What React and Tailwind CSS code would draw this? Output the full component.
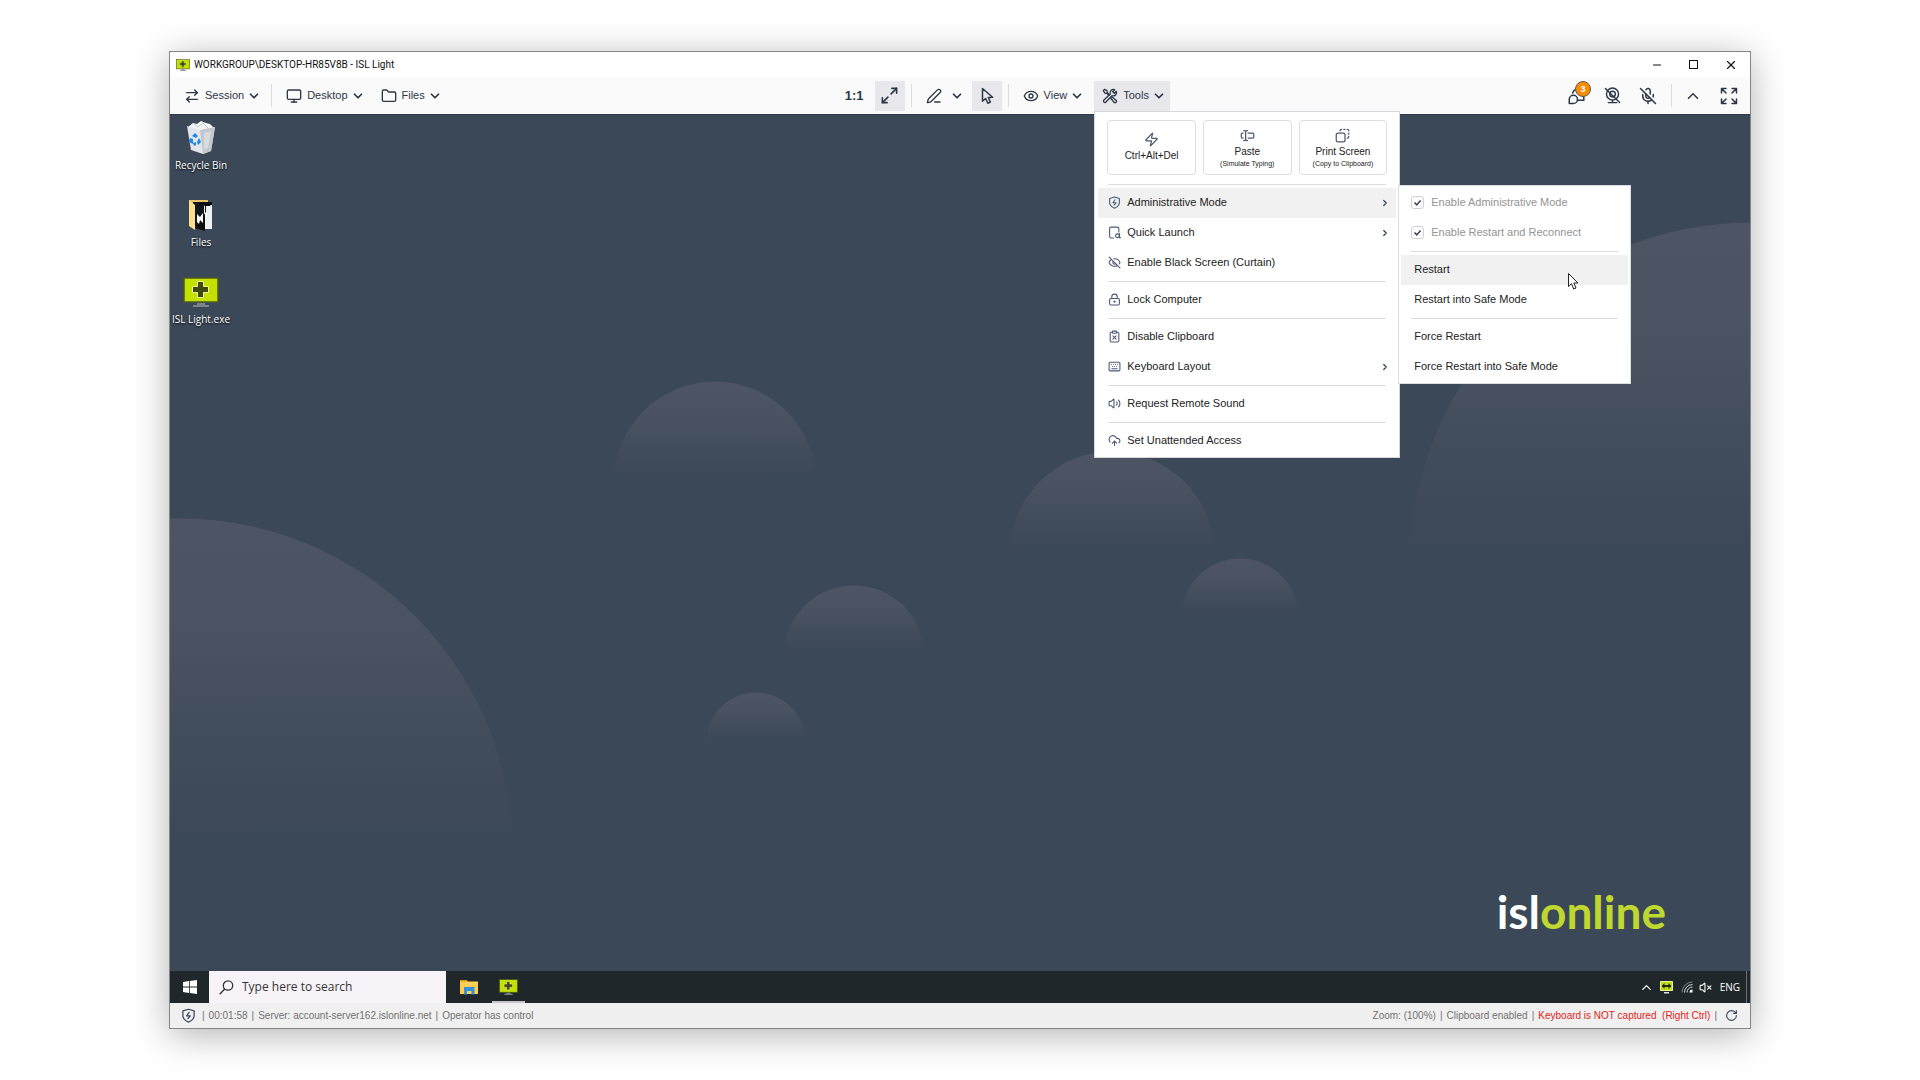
import React from 'react';
import {
    ArrowRightLeft, ChevronDown, ChevronRight, ChevronUp, ClipboardX, CloudUpload, Eye, EyeOff, Folder,
    Keyboard, LockKeyhole, Maximize2, MicOff, Minus, Monitor, PenLine, RotateCw, Search,
    TextCursorInput, Volume2, VolumeX, X, Zap,
} from 'lucide-react';

const IconBase = ({ size = 16, className = '', strokeWidth = 2, children }) => (
    <svg
        width={size}
        height={size}
        viewBox="0 0 24 24"
        fill="none"
        stroke="currentColor"
        strokeWidth={strokeWidth}
        strokeLinecap="round"
        strokeLinejoin="round"
        className={className}
        aria-hidden="true"
    >
        {children}
    </svg>
);

const PointerIcon = (props) => (
    <IconBase {...props}>
        <path d="M6 2v17l4.2-3.6 2.9 6.2 3.4-1.6-2.8-6.1 5.8-.3z" />
    </IconBase>
);

const ToolsIcon = (props) => (
    <IconBase {...props}>
        <path d="m2 4 2-2 3.500 2 .5 3 3 3M2 4l2 3.500 3 .5 3 3" />
        <path d="m14.500 13 6.500 5.500a2 2 0 0 1-3 3L13 15" />
        <path d="M19 2.500a5 5 0 0 0-6.500 6.500L2.500 18.500a2.200 2.200 0 0 0 3 3L15 11.500A5 5 0 0 0 21.500 5l-3 3-2.500-2.500z" />
    </IconBase>
);

const ShieldZapIcon = (props) => (
    <IconBase {...props}>
        <path d="M12 2 21 4.500V12c0 5-4 8.500-9 10.500C7 20.500 3 17 3 12V4.500z" />
        <path d="m13 7-4 5.500h6L11 17" />
    </IconBase>
);

const QuickLaunchIcon = (props) => (
    <IconBase {...props}>
        <path d="M10 22H6a3 3 0 0 1-3-3V4a2 2 0 0 1 2-2h12a3 3 0 0 1 3 3v6" />
        <circle cx="17.500" cy="18" r="3.500" />
        <path d="M21 14v7.500h2" />
    </IconBase>
);

const PrintScreenIcon = (props) => (
    <IconBase {...props}>
        <rect x="2" y="8" width="14" height="14" rx="3" />
        <path d="M8 4.500A2.500 2.500 0 0 1 10.500 2M14 2h2M19.500 2A2.500 2.500 0 0 1 22 4.500M22 8v2M22 13.500a2.500 2.500 0 0 1-2.500 2.500" />
    </IconBase>
);

const ChatIcon = (props) => (
    <IconBase {...props}>
        <path d="M3 22v-5.500A5.500 5.500 0 1 1 8.500 22z" />
        <path d="M7.500 8A7 7 0 0 1 21 8c1.500 2.500 1.500 6 1.500 9.500H14" />
    </IconBase>
);

const WebcamOffIcon = (props) => (
    <IconBase {...props}>
        <circle cx="12" cy="10" r="8.500" />
        <circle cx="12" cy="10" r="4" />
        <path d="M12 18.500V22M6 22h12M2 2l20 20" />
    </IconBase>
);

const FullscreenIcon = (props) => (
    <IconBase {...props}>
        <path d="M2 8V2h6M16 2h6v6M22 16v6h-6M8 22H2v-6M2.500 2.500 8 8M21.500 2.500 16 8M21.500 21.500 16 16M2.500 21.500 8 16" />
    </IconBase>
);

const IslIcon = ({ width, height, className = '' }) => (
    <svg width={width} height={height} viewBox="0 0 36 30" className={className} aria-hidden="true">
        <rect x="1" y="1" width="34" height="24" fill="#c4e000" stroke="#4d5a1c" strokeWidth="1.500" />
        <path d="M14.500 4.500h6v5h5v6h-5v5h-6v-5h-5v-6h5z" fill="#3f4a10" stroke="#eef79a" strokeWidth="1" />
        <path d="M14 26h8v2h4v2H10v-2h4z" fill="#7c828a" />
    </svg>
);

const TrayIslIcon = () => (
    <svg width="13" height="13" viewBox="0 0 13 13" className="ml-[6px]" aria-hidden="true">
        <path d="M.5.5h12v9H.5z" fill="#c4e000" stroke="#e9f3a0" />
        <path d="M1.500 5 4.500 2v2h4V2l3 3-3 3V6h-4v2z" fill="#20272a" />
        <path d="M4 11h5v1.500H4z" fill="#dfe3e6" />
    </svg>
);

const RecycleBinIcon = () => (
    <svg width="30" height="33" viewBox="0 0 30 33" aria-hidden="true">
        <path d="M2 6 7 2l4 1 4-3 5 2 4 1 4 4-3 3H4z" fill="#f2f4f6" />
        <path d="m8 3 4 3 5-4 5 5" stroke="#c3c8cd" fill="none" />
        <path d="m1 5 13 4 15-3-4 24-8 3-12-4z" fill="#e2e5e9" />
        <path d="m14 9 15-3-4 24-8 3z" fill="#c3c8ce" />
        <path d="m18 12 7-2-3 17-4 2z" fill="#d8dce0" />
        <path d="m6 15 3-3 3 3-2 2zM4 17l3 1v5l-4-2zM13 17l2 4-3 3-1-3zM7 22l3-1v3l-2 1z" fill="#1e88e5" />
    </svg>
);

const FilesIcon = () => (
    <svg width="26" height="32" viewBox="0 0 26 32" aria-hidden="true">
        <path d="M1 1h19v5H1z" fill="#e9c46a" />
        <path d="M5 3h19v24H5z" fill="#10151a" />
        <path d="M16 6h8v24h-8z" fill="#f7f9fb" />
        <path d="M24 4 8 3l9 4v25L7 29z" fill="#0b0d10" />
        <path d="M18 7h6v23h-6z" fill="#eef2f6" />
        <path d="m9 15 3 3 3-4v10l-3-3-1 4-2-2z" fill="#fff" />
        <path d="m1 1 6 5v25l-6-4z" fill="#fbdf8e" />
    </svg>
);

const WindowsLogo = () => (
    <svg width="14" height="14" viewBox="0 0 14 14" fill="#fff" aria-hidden="true">
        <path d="M0 2l6-.9v5.500H0zM6.800 1 14 0v6.600H6.800zM0 7.400h6v5.500L0 12zM6.800 7.400H14V14l-7.200-1z" />
    </svg>
);

const ExplorerIcon = () => (
    <svg width="18" height="16" viewBox="0 0 18 16" aria-hidden="true">
        <path d="M0 1h7l1 2H0z" fill="#e39a13" />
        <path d="M0 2.500h18V15H0z" fill="#fccf52" />
        <path d="M4 8h10.500v7.500h-3V12H7v3.500H4z" fill="#3490dc" />
    </svg>
);

const SearchIcon = () => (
    <svg width="15" height="15" viewBox="0 0 15 15" fill="none" stroke="#333" strokeWidth="1.300" aria-hidden="true">
        <circle cx="9" cy="5.500" r="4.700" />
        <path d="M5.700 9 .7 14.300" />
    </svg>
);

const WifiIcon = () => (
    <svg width="12" height="12" viewBox="0 0 12 12" fill="none" strokeWidth="1" aria-hidden="true">
        <path d="M1 11.500A10.500 10.500 0 0 1 11.500 1" stroke="#7d8488" />
        <path d="M3.500 11.500a8 8 0 0 1 8-8M6 11.500A5.500 5.500 0 0 1 11.500 6" stroke="#d5d9dc" />
        <path d="M8.500 11.500a3 3 0 0 1 3-3v3z" fill="#fff" />
    </svg>
);

const MouseCursor = ({ className }) => (
    <svg width="11" height="17" viewBox="0 0 11 17" className={className} aria-hidden="true">
        <path d="M.5.5v13l3-2.800 2.200 5.300 2.300-1-2.200-5H10z" fill="#fff" stroke="#222" />
    </svg>
);

// x, y and r of every bubble on the 1580x857 wallpaper
const bubbles = [
    [10, 736, 332],
    [545, 368, 101],
    [684, 541, 70],
    [586, 627, 49],
    [942, 439, 102],
    [1070, 502, 58],
    [1582, 450, 342],
];

const Wallpaper = () => (
    <svg
        className="absolute inset-0 w-full h-full"
        viewBox="0 0 1580 857"
        preserveAspectRatio="xMidYMid slice"
        aria-hidden="true"
    >
        <defs>
            <linearGradient id="bubble" x1="0" y1="0" x2="0" y2="1">
                <stop offset="0" stopColor="#4d5564" />
                <stop offset="0.150" stopColor="#4d5564" stopOpacity="0.850" />
                <stop offset="0.480" stopColor="#4d5564" stopOpacity="0" />
            </linearGradient>
        </defs>
        {bubbles.map(([x, y, r]) => (
            <circle key={`${x}-${y}`} cx={x} cy={y} r={r} fill="url(#bubble)" />
        ))}
    </svg>
);

const ToolbarButton = ({ icon: Icon, label, name, active }) => (
    <button
        type="button"
        aria-label={name}
        className={`h-[30px] pl-2 pr-1 flex items-center text-[11px] ${active ? 'bg-[#e8e7ec]' : ''}`}
    >
        <Icon size={16} strokeWidth={2} className="mr-[5px]" />
        {label}
        <ChevronDown size={14} strokeWidth={3} className="ml-[3px]" />
    </button>
);

const IconButton = ({ label, active, children }) => (
    <button
        type="button"
        aria-label={label}
        className={`relative size-[30px] flex items-center justify-center ${active ? 'bg-[#e8e7ec]' : ''}`}
    >
        {children}
    </button>
);

const Divider = () => <div className="w-px h-[23px] bg-[#dcdce2]" />;

const Separator = () => <div role="separator" className="h-px my-[3px] mx-[10px] bg-[#dcdde3]" />;

const ActionCard = ({ icon: Icon, title, note }) => (
    <button
        type="button"
        className={`h-[55px] flex-1 flex flex-col items-center justify-center rounded border border-[#dcdde6] ${note ? 'pt-px' : ''}`}
    >
        <Icon size={15} strokeWidth={2} className="text-[#4d5875]" />
        <span className="text-[10px] leading-[14px] mt-[2px] whitespace-nowrap">{title}</span>
        {note && <span className="text-[7px] leading-[9px] whitespace-nowrap">{note}</span>}
    </button>
);

const MenuItem = ({ icon: Icon, label, active, arrow }) => (
    <button
        type="button"
        role="menuitem"
        className={`w-full h-[30px] pr-[6px] flex items-center text-left whitespace-nowrap ${Icon ? 'pl-[10px]' : 'pl-[13px]'} ${active ? 'bg-[#f1f1f1]' : ''}`}
    >
        {Icon && <Icon size={13} strokeWidth={2} className="mr-[6px] text-[#4d5875]" />}
        {label}
        {arrow && <ChevronRight size={10} strokeWidth={3} className="ml-auto text-[#3a4560]" />}
    </button>
);

const CheckItem = ({ label }) => (
    <label className="h-[30px] px-[10px] flex items-center gap-[7px] text-[#949494] whitespace-nowrap">
        <span className="relative size-[13px]">
            <input
                type="checkbox"
                defaultChecked
                disabled
                className="block size-[13px] appearance-none rounded-[3px] border border-[#cfd0dc] bg-white"
            />
            <svg className="absolute inset-0" viewBox="0 0 13 13" fill="none" stroke="#3a4560" strokeWidth="1.500" aria-hidden="true">
                <path d="m3.500 6.500 2.200 2.300 4-4.300" />
            </svg>
        </span>
        {label}
    </label>
);

const RestartMenu = () => (
    <div
        role="menu"
        className="absolute left-full -top-[3px] ml-[2px] w-[233px] border border-[#dcdde3] bg-white px-[2px] pt-[2px] pb-px"
    >
        <CheckItem label="Enable Administrative Mode" />
        <CheckItem label="Enable Restart and Reconnect" />
        <Separator />
        <div className="relative">
            <MenuItem label="Restart" active />
            <MouseCursor className="absolute left-[167px] bottom-[-5px]" />
        </div>
        <MenuItem label="Restart into Safe Mode" />
        <Separator />
        <MenuItem label="Force Restart" />
        <MenuItem label="Force Restart into Safe Mode" />
    </div>
);

const ToolsMenu = () => (
    <div
        role="menu"
        className="absolute left-0 top-full z-10 w-[306px] border border-[#d5d6dc] bg-white px-[3px] pb-px text-[11px] text-[#222]"
    >
        <div className="flex gap-[7px] px-[9px] pt-2 pb-[6px]">
            <ActionCard icon={Zap} title="Ctrl+Alt+Del" />
            <ActionCard icon={TextCursorInput} title="Paste" note="(Simulate Typing)" />
            <ActionCard icon={PrintScreenIcon} title="Print Screen" note="(Copy to Clipboard)" />
        </div>
        <Separator />
        <div className="relative">
            <MenuItem icon={ShieldZapIcon} label="Administrative Mode" active arrow />
            <RestartMenu />
        </div>
        <MenuItem icon={QuickLaunchIcon} label="Quick Launch" arrow />
        <MenuItem icon={EyeOff} label="Enable Black Screen (Curtain)" />
        <Separator />
        <MenuItem icon={LockKeyhole} label="Lock Computer" />
        <Separator />
        <MenuItem icon={ClipboardX} label="Disable Clipboard" />
        <MenuItem icon={Keyboard} label="Keyboard Layout" arrow />
        <Separator />
        <MenuItem icon={Volume2} label="Request Remote Sound" />
        <Separator />
        <MenuItem icon={CloudUpload} label="Set Unattended Access" />
    </div>
);

const TitleBar = () => (
    <header className="h-[25px] pl-[6px] pr-3 flex items-center bg-white text-[#111]">
        <IslIcon width={14} height={12} />
        <h1 className="ml-1 font-['Roboto',sans-serif] text-[10px]">WORKGROUP\DESKTOP-HR85V8B - ISL Light</h1>
        <div className="ml-auto flex items-center gap-[25px]">
            <button type="button" aria-label="Minimize"><Minus size={12} strokeWidth={2} /></button>
            <button type="button" aria-label="Maximize"><span className="block size-[9px] m-px border border-[#111]" /></button>
            <button type="button" aria-label="Close"><X size={14} strokeWidth={2} /></button>
        </div>
    </header>
);

const Toolbar = () => (
    <nav className="h-[37px] flex items-center bg-[#fafafa] text-[#2d3748]">
        <div className="w-[42%] pl-[6px] flex items-center">
            <ToolbarButton icon={ArrowRightLeft} label="Session" />
            <div className="mx-[6px]"><Divider /></div>
            <ToolbarButton icon={Monitor} label="Desktop" />
            <div className="w-1" />
            <ToolbarButton icon={Folder} label="Files" />
        </div>
        <div className="flex items-center">
            <button type="button" className="w-[41px] h-[30px] text-[13px] font-bold">1:1</button>
            <IconButton label="Fit to window" active><Maximize2 size={19} strokeWidth={2} /></IconButton>
            <div className="mx-[6px]"><Divider /></div>
            <ToolbarButton icon={PenLine} name="Draw" />
            <div className="w-1" />
            <IconButton label="Pointer" active><PointerIcon size={18} /></IconButton>
            <div className="mx-[6px]"><Divider /></div>
            <ToolbarButton icon={Eye} label="View" />
            <div className="w-[6px]" />
            <div className="relative">
                <ToolbarButton icon={ToolsIcon} label="Tools" active />
                <ToolsMenu />
            </div>
        </div>
        <div className="ml-auto pr-[6px] flex items-center gap-[6px]">
            <IconButton label="Chat, 3 new messages">
                <ChatIcon size={18} strokeWidth={2} />
                <span className="absolute left-[14px] top-0 size-4 rounded-full border border-[#5c5a52] bg-[#fb8c00] text-white text-[9px] leading-[14px] font-bold text-center">
                    3
                </span>
            </IconButton>
            <IconButton label="Camera off"><WebcamOffIcon size={17} /></IconButton>
            <IconButton label="Microphone off"><MicOff size={18} strokeWidth={2} /></IconButton>
            <div className="ml-[2px]"><Divider /></div>
            <IconButton label="Collapse toolbar"><ChevronUp size={18} strokeWidth={2} /></IconButton>
            <IconButton label="Full screen"><FullscreenIcon size={18} /></IconButton>
        </div>
    </nav>
);

const DesktopIcon = ({ label, children }) => (
    <button type="button" className="h-[77px] w-[62px] flex flex-col items-center text-white">
        <span className="h-[35px] flex items-center justify-center">{children}</span>
        <span className="mt-[3px] font-['Open_Sans',sans-serif] text-[10px] leading-[14px] whitespace-nowrap [text-shadow:0_1px_2px_#000]">
            {label}
        </span>
    </button>
);

const Desktop = () => (
    <main className="relative flex-1 bg-[#3b4857] border-t border-[#2c3a4b]">
        <Wallpaper />
        <div className="relative pt-[5px] flex flex-col items-start">
            <DesktopIcon label="Recycle Bin"><RecycleBinIcon /></DesktopIcon>
            <DesktopIcon label="Files"><FilesIcon /></DesktopIcon>
            <DesktopIcon label="ISL Light.exe"><IslIcon width={36} height={30} /></DesktopIcon>
        </div>
        <div className="absolute right-[84px] bottom-[31px] font-['Lato',sans-serif] font-bold text-[46px] leading-[56px] text-white">
            isl<span className="text-[#bfd72f]">online</span>
        </div>
    </main>
);

const Taskbar = () => (
    <div className="h-8 flex items-stretch bg-[#20272a] text-white">
        <button type="button" aria-label="Start" className="w-[39px] flex items-center justify-center">
            <WindowsLogo />
        </button>
        <label className="w-[237px] pl-[10px] flex items-center gap-2 bg-[#f8f3f8] text-[#333]">
            <SearchIcon />
            <input
                type="text"
                aria-label="Search"
                placeholder="Type here to search"
                className="min-w-0 flex-1 bg-transparent font-['Open_Sans',sans-serif] text-[12px] outline-none placeholder:text-[#333]"
            />
        </label>
        <button type="button" aria-label="File Explorer" className="ml-[6px] w-[33px] flex items-center justify-center">
            <ExplorerIcon />
        </button>
        <button type="button" aria-label="ISL Light" className="ml-[7px] w-[33px] pt-px flex items-center justify-center border-b-2 border-[#c9c4cc]">
            <IslIcon width={19} height={16} />
        </button>
        <div className="ml-auto pr-[3px] flex items-center">
            <ChevronUp size={15} strokeWidth={2} />
            <TrayIslIcon />
            <span className="ml-[8px]"><WifiIcon /></span>
            <VolumeX size={13} strokeWidth={2} className="ml-[6px]" />
            <span className="ml-2 mr-[6px] font-['Open_Sans',sans-serif] text-[10px]">ENG</span>
            <div className="w-px self-stretch bg-[#6d7375]" />
        </div>
    </div>
);

const StatusBar = () => (
    <footer className="h-[25px] pl-[11px] pr-3 flex items-center gap-1 bg-[#f0f0f0] text-[10px] text-[#707070]">
        <ShieldZapIcon size={15} className="mr-[2px] text-[#3a4560]" />
        <span>|</span>
        <span>00:01:58</span>
        <span>|</span>
        <span>Server: account-server162.islonline.net</span>
        <span>|</span>
        <span>Operator has control</span>
        <span className="ml-auto">Zoom: (100%)</span>
        <span>|</span>
        <span>Clipboard enabled</span>
        <span>|</span>
        <span className="text-[#e2231a]">Keyboard is NOT captured&nbsp; (Right Ctrl)</span>
        <span>|</span>
        <button type="button" aria-label="Refresh" className="ml-1 text-[#3a4560]">
            <RotateCw size={13} strokeWidth={2} />
        </button>
    </footer>
);

const App = () => {
    return (
        <div className="min-h-screen px-[169px] py-[51px] flex bg-white font-['Liberation_Sans',Arial,sans-serif]">
            <div className="flex-1 flex flex-col border border-[#858585] shadow-[0_6px_34px_rgba(0,0,0,0.3)]">
                <TitleBar />
                <Toolbar />
                <Desktop />
                <Taskbar />
                <StatusBar />
            </div>
        </div>
    );
};

export default App;
